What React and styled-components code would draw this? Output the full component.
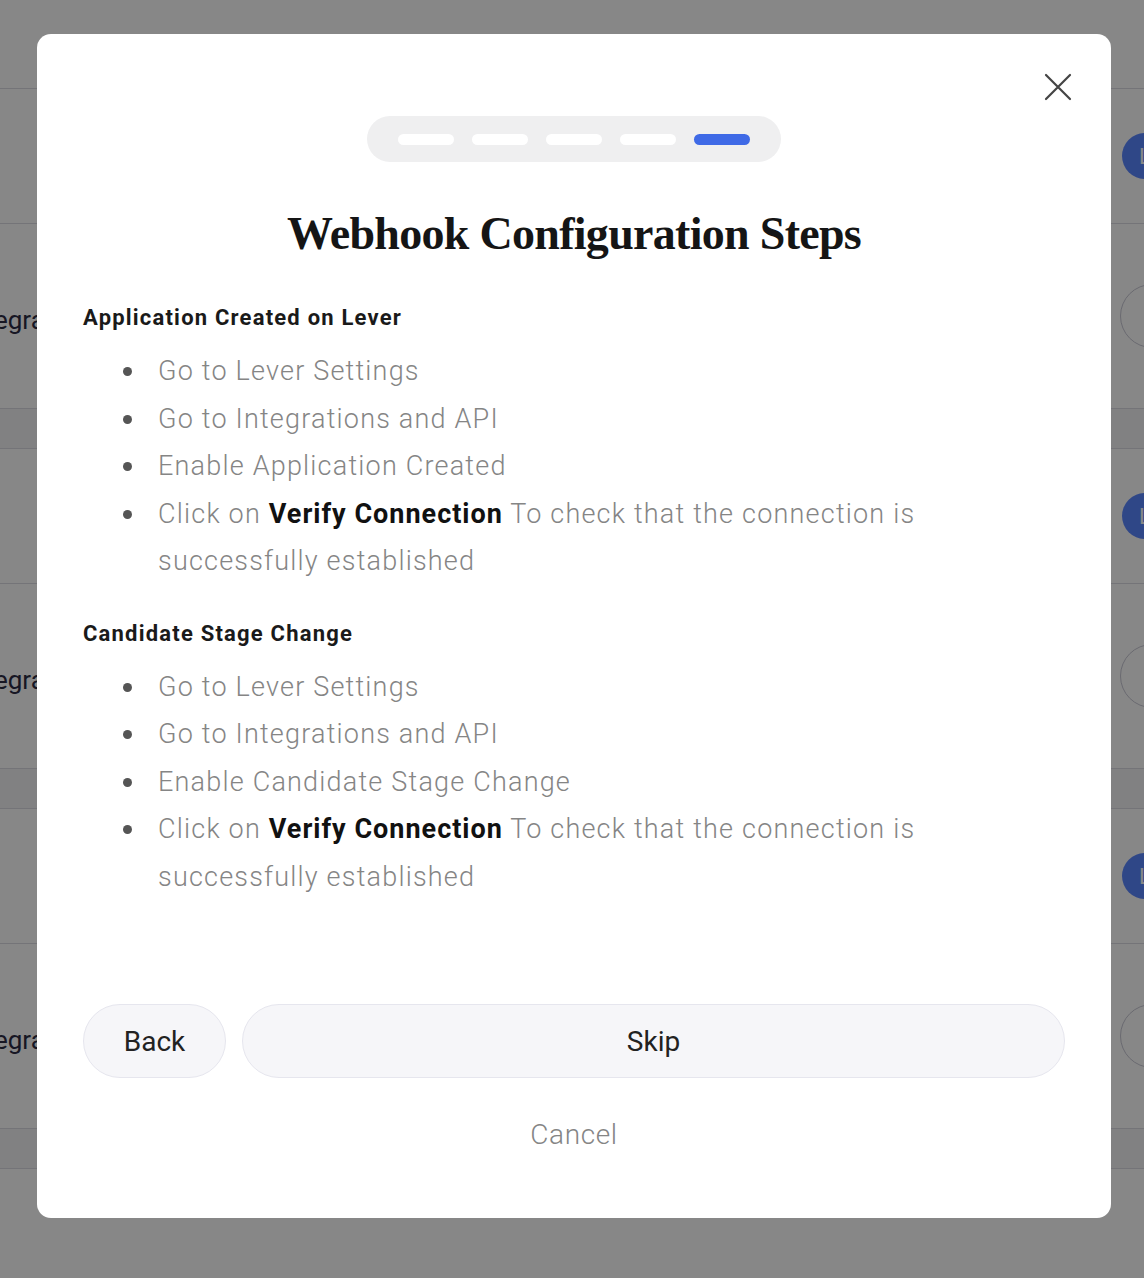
import React from "react";
import styled, { createGlobalStyle } from "styled-components";

const GlobalStyle = createGlobalStyle`
  * { box-sizing: border-box; }
  html, body { margin: 0; padding: 0; }
  body {
    font-family: Roboto, "Liberation Sans", sans-serif;
    background: #fff;
    overflow: hidden;
  }
`;

const steps = [
  {
    title: "Application Created on Lever",
    items: ["Go to Lever Settings", "Go to Integrations and API", "Enable Application Created"],
  },
  {
    title: "Candidate Stage Change",
    items: ["Go to Lever Settings", "Go to Integrations and API", "Enable Candidate Stage Change"],
  },
];

const App = () => {
  return (
    <>
      <GlobalStyle />
      <Page>
        <PageHeader />
        {[0, 1, 2].map((i) => (
          <Block key={i}>
            <Row $height={135}>
              <Avatar>L</Avatar>
            </Row>
            <Row $height={185}>
              <Label>
                <span>Integration</span>
              </Label>
              <RoundAction />
            </Row>
            <Band />
          </Block>
        ))}
      </Page>

      <Overlay>
        <Modal>
          <CloseButton aria-label="Close">
            <svg width="28" height="28" viewBox="0 0 28 28" fill="none">
              <path d="M2 2L26 26M26 2L2 26" stroke="#444" strokeWidth="2.2" strokeLinecap="round" />
            </svg>
          </CloseButton>

          <Stepper>
            {[0, 1, 2, 3, 4].map((i) => (
              <Dash key={i} $active={i === 4} />
            ))}
          </Stepper>

          <Title>Webhook Configuration Steps</Title>

          {steps.map((s, idx) => (
            <Section key={s.title} $first={idx === 0}>
              <SectionTitle>{s.title}</SectionTitle>
              <List>
                {s.items.map((it) => (
                  <Item key={it}>{it}</Item>
                ))}
                <Item>
                  Click on <strong>Verify Connection</strong> To check that the connection is
                  successfully established
                </Item>
              </List>
            </Section>
          ))}

          <Actions>
            <PillButton>Back</PillButton>
            <PillButton $grow>Skip</PillButton>
          </Actions>
          <CancelLink>Cancel</CancelLink>
        </Modal>
      </Overlay>
    </>
  );
};

export default App;

const Page = styled.div`
  width: 100%;
  min-height: 1278px;
  background: #fff;
`;

const PageHeader = styled.div`
  height: 89px;
  border-bottom: 1px solid #dcdce2;
`;

const Block = styled.div`
  display: flex;
  flex-direction: column;
`;

const Row = styled.div`
  height: ${(p) => p.$height}px;
  display: flex;
  align-items: center;
  justify-content: space-between;
  border-bottom: 1px solid #dcdce2;
`;

const Band = styled.div`
  height: 40px;
  background: #f4f4f6;
  border-bottom: 1px solid #dcdce2;
`;

const Label = styled.div`
  width: 60px;
  overflow: hidden;
  white-space: nowrap;
  font-size: 26px;
  color: #2c2c44;
  padding-top: 8px;

  span {
    display: inline-block;
    margin-left: -36px;
  }
`;

const Avatar = styled.div`
  margin-left: auto;
  margin-right: -24px;
  width: 46px;
  height: 46px;
  border-radius: 50%;
  background: #5a86ff;
  color: #fff;
  font-size: 22px;
  display: flex;
  align-items: center;
  justify-content: center;
`;

const RoundAction = styled.div`
  width: 64px;
  height: 64px;
  margin-right: -40px;
  border-radius: 50%;
  border: 1.5px solid #c8c8d4;
`;

const Overlay = styled.div`
  position: fixed;
  inset: 0;
  background: rgba(0, 0, 0, 0.47);
  padding: 34px 0 0 37px;
`;

const Modal = styled.div`
  position: relative;
  width: 1074px;
  height: 1184px;
  background: #fff;
  border-radius: 14px;
  padding: 82px 46px 0 46px;
  display: flex;
  flex-direction: column;
  align-items: stretch;
`;

const CloseButton = styled.button`
  position: absolute;
  top: 39px;
  right: 39px;
  width: 28px;
  height: 28px;
  padding: 0;
  border: none;
  background: none;
  cursor: pointer;
  display: flex;
`;

const Stepper = styled.div`
  align-self: center;
  width: 414px;
  height: 46px;
  border-radius: 23px;
  background: #efeff0;
  display: flex;
  align-items: center;
  justify-content: center;
  gap: 18px;
`;

const Dash = styled.div`
  width: 56px;
  height: 11px;
  border-radius: 6px;
  background: ${(p) => (p.$active ? "#3f6ae6" : "#fff")};
`;

const Title = styled.h2`
  margin: 48px 0 0;
  text-align: center;
  font-family: "Liberation Serif", "DejaVu Serif", serif;
  font-weight: 700;
  font-size: 46px;
  line-height: 48px;
  letter-spacing: -0.7px;
  color: #151515;
`;

const Section = styled.div`
  margin-top: ${(p) => (p.$first ? 48 : 36)}px;
`;

const SectionTitle = styled.h3`
  margin: 0;
  font-size: 22px;
  line-height: 24px;
  font-weight: 700;
  color: #1a1a1a;
  letter-spacing: 1.2px;
`;

const List = styled.ul`
  list-style: none;
  margin: 18px 0 0;
  padding: 0 0 0 75px;
  max-width: 880px;
`;

const Item = styled.li`
  position: relative;
  font-size: 27px;
  line-height: 47.5px;
  font-weight: 300;
  letter-spacing: 1.2px;
  color: #858585;

  &::before {
    content: "";
    position: absolute;
    left: -35px;
    top: 19px;
    width: 9px;
    height: 9px;
    border-radius: 50%;
    background: #555;
  }

  strong {
    font-weight: 700;
    color: #111;
    letter-spacing: 1px;
  }
`;

const Actions = styled.div`
  margin-top: 103px;
  display: flex;
  gap: 16px;
`;

const PillButton = styled.button`
  flex: ${(p) => (p.$grow ? "1" : "0 0 143px")};
  height: 74px;
  border-radius: 37px;
  border: 1.5px solid #e6e6ee;
  background: #f6f6f9;
  font-family: Roboto, "Liberation Sans", sans-serif;
  font-size: 28px;
  color: #222;
  cursor: pointer;
`;

const CancelLink = styled.button`
  align-self: center;
  margin-top: 41px;
  border: none;
  background: none;
  padding: 0;
  font-family: Roboto, "Liberation Sans", sans-serif;
  font-size: 28px;
  line-height: 32px;
  font-weight: 300;
  letter-spacing: 0.6px;
  color: #858585;
  cursor: pointer;
`;
